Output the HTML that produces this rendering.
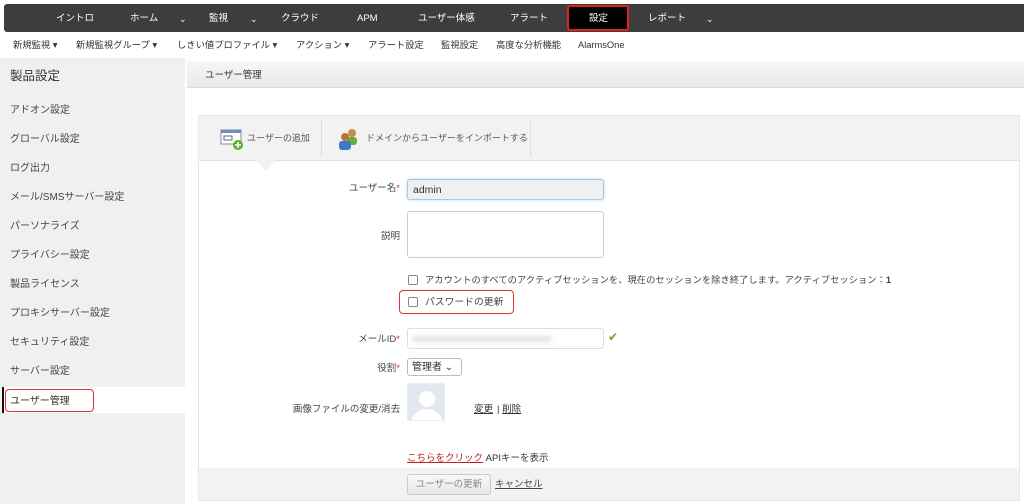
<!DOCTYPE html>
<html><head><meta charset="utf-8"><style>
*{margin:0;padding:0;box-sizing:border-box}
body{width:1024px;height:504px;overflow:hidden;background:#fff;font-family:"Liberation Sans","Noto Sans CJK JP",sans-serif;font-size:10px;color:#333;position:relative;line-height:12px}
.a{position:absolute;white-space:nowrap}
#nav{left:4px;top:4px;width:1024px;height:28px;background:#3d3d3d;border-radius:3px}
.n{position:absolute;top:13px;color:#fff;font-size:9.5px;line-height:12px}
.car{position:absolute;top:13px;color:#fff;font-size:9px;line-height:12px}
#sub .s{position:absolute;top:39px;font-size:9.3px;color:#333;line-height:12px}
#side{left:0;top:58px;width:185px;height:446px;background:#f0f0f0}
.si{position:absolute;left:10px;font-size:10px;color:#444;line-height:14px}
.lab{position:absolute;font-size:9.5px;color:#444;text-align:right}
.st{color:#c33}
.cb{position:absolute;width:10px;height:10px;border:1px solid #888;border-radius:2px;background:#fff}
</style></head><body>
<div class="a" id="nav"></div>
<div class="n" style="left:56px">イントロ</div>
<div class="n" style="left:130px">ホーム</div><div class="car" style="left:179px">⌄</div>
<div class="n" style="left:209px">監視</div><div class="car" style="left:250px">⌄</div>
<div class="n" style="left:281px">クラウド</div>
<div class="n" style="left:357px">APM</div>
<div class="n" style="left:418px">ユーザー体感</div>
<div class="n" style="left:510px">アラート</div>
<div class="a" style="left:567px;top:5px;width:62px;height:26px;background:#000;border:2px solid #d22;border-radius:3px"></div>
<div class="n" style="left:589px">設定</div>
<div class="n" style="left:648px">レポート</div><div class="car" style="left:706px">⌄</div>
<div id="sub">
<div class="s" style="left:13px">新規監視 ▾</div>
<div class="s" style="left:76px">新規監視グループ ▾</div>
<div class="s" style="left:177px">しきい値プロファイル ▾</div>
<div class="s" style="left:296px">アクション ▾</div>
<div class="s" style="left:368px">アラート設定</div>
<div class="s" style="left:441px">監視設定</div>
<div class="s" style="left:496px">高度な分析機能</div>
<div class="s" style="left:578px">AlarmsOne</div>
</div>
<div class="a" id="side"></div>
<div class="si" style="top:68px;font-size:12.5px;color:#333;line-height:16px">製品設定</div>
<div class="si" style="top:104px">アドオン設定</div>
<div class="si" style="top:133px">グローバル設定</div>
<div class="si" style="top:162px">ログ出力</div>
<div class="si" style="top:191px">メール/SMSサーバー設定</div>
<div class="si" style="top:220px">パーソナライズ</div>
<div class="si" style="top:249px">プライバシー設定</div>
<div class="si" style="top:278px">製品ライセンス</div>
<div class="si" style="top:307px">プロキシサーバー設定</div>
<div class="si" style="top:336px">セキュリティ設定</div>
<div class="si" style="top:365px">サーバー設定</div>
<div class="a" style="left:2px;top:387px;width:183px;height:26px;background:#fff;border-left:2px solid #111"></div>
<div class="a" style="left:5px;top:389px;width:89px;height:23px;border:1.5px solid #d33;border-radius:4px"></div>
<div class="si" style="top:395px;color:#333">ユーザー管理</div>
<div class="a" style="left:187px;top:61px;width:837px;height:27px;background:linear-gradient(#f7f7f7,#e9e9e9);border-bottom:1px solid #ddd"></div>
<div class="a" style="left:205px;top:70px;font-size:9.5px;color:#333">ユーザー管理</div>
<div class="a" style="left:198px;top:115px;width:822px;height:386px;border:1px solid #e6e6e6"></div>
<div class="a" style="left:199px;top:116px;width:820px;height:45px;background:#f2f2f2;border-bottom:1px solid #e2e2e2"></div>
<div class="a" style="left:321px;top:121px;height:36px;border-left:1px dotted #ccc"></div>
<div class="a" style="left:530px;top:121px;height:36px;border-left:1px dotted #ccc"></div>
<div class="a" style="left:256px;top:160px;width:0;height:0;border-left:10px solid transparent;border-right:10px solid transparent;border-top:11px solid #f2f2f2"></div>
<svg class="a" style="left:220px;top:128px" width="26" height="24"><rect x="1" y="2" width="20" height="14" fill="#fff" stroke="#889" /><rect x="1" y="2" width="20" height="3" fill="#6a8fbf"/><rect x="4" y="8" width="8" height="4" fill="none" stroke="#667"/><circle cx="18" cy="17" r="5" fill="#5cae34"/><path d="M18 14v6M15 17h6" stroke="#fff" stroke-width="1.6"/></svg>
<div class="a" style="left:247px;top:132px;font-size:9px;color:#555">ユーザーの追加</div>
<svg class="a" style="left:337px;top:127px" width="24" height="24"><circle cx="15" cy="6" r="4" fill="#c88a4a"/><rect x="10" y="10" width="10" height="8" rx="3" fill="#6bab3f"/><circle cx="8" cy="10" r="4" fill="#b7743a"/><rect x="2" y="14" width="12" height="9" rx="3" fill="#3d7ac4"/></svg>
<div class="a" style="left:366px;top:132px;font-size:9px;color:#555">ドメインからユーザーをインポートする</div>
<div class="lab" style="left:300px;width:100px;top:183px">ユーザー名<span class="st">*</span></div>
<div class="a" style="left:407px;top:179px;width:197px;height:21px;background:#eef0f2;border:1px solid #a9c8e8;border-radius:3px;box-shadow:0 0 3px #bcd7f2;padding:4px 5px;font-size:10.5px">admin</div>
<div class="lab" style="left:300px;width:100px;top:231px">説明</div>
<div class="a" style="left:407px;top:211px;width:197px;height:47px;border:1px solid #ccc;border-radius:3px"></div>
<div class="cb" style="left:408px;top:275px"></div>
<div class="a" style="left:425px;top:274px;font-size:9.3px;color:#444">アカウントのすべてのアクティブセッションを、現在のセッションを除き終了します。アクティブセッション：<b>1</b></div>
<div class="a" style="left:399px;top:290px;width:115px;height:24px;border:1.5px solid #d33;border-radius:4px"></div>
<div class="cb" style="left:408px;top:297px"></div>
<div class="a" style="left:425px;top:297px;font-size:9.8px;color:#444">パスワードの更新</div>
<div class="lab" style="left:300px;width:100px;top:334px">メールID<span class="st">*</span></div>
<div class="a" style="left:407px;top:328px;width:197px;height:21px;border:1px solid #ddd;border-radius:3px"><div style="margin:7px 4px;width:140px;height:6px;background:#e4e4e4;border-radius:3px;filter:blur(2px)"></div></div>
<div class="a" style="left:608px;top:331px;color:#6a2;font-size:12px">✔</div>
<div class="lab" style="left:300px;width:100px;top:363px">役割<span class="st">*</span></div>
<div class="a" style="left:407px;top:358px;width:55px;height:18px;border:1px solid #bbb;border-radius:3px;font-size:10px;padding:3px 4px">管理者 ⌄</div>
<div class="a" style="left:407px;top:383px;width:38px;height:38px;background:#e3e7ef;border:1px solid #eee;overflow:hidden"><svg width="38" height="38"><circle cx="19" cy="15" r="8" fill="#fff"/><path d="M3 38c2-10 10-13 16-13s14 3 16 13z" fill="#fff"/></svg></div>
<div class="lab" style="left:200px;width:200px;top:404px">画像ファイルの変更/消去</div>
<div class="a" style="left:474px;top:404px;font-size:9.5px;text-decoration:underline">変更</div>
<div class="a" style="left:497px;top:404px;font-size:9.5px">| <u>削除</u></div>
<div class="a" style="left:407px;top:453px;font-size:9.5px"><u style="color:#b22">こちらをクリック</u> APIキーを表示</div>
<div class="a" style="left:199px;top:468px;width:820px;height:32px;background:#f2f2f2"></div>
<div class="a" style="left:407px;top:474px;width:84px;height:21px;border:1px solid #ccc;border-radius:3px;background:linear-gradient(#f8f8f8,#e6e6e6);color:#888;font-size:9.5px;text-align:center;line-height:20px">ユーザーの更新</div>
<div class="a" style="left:495px;top:479px;font-size:9.5px;text-decoration:underline;color:#444">キャンセル</div>
</body></html>
